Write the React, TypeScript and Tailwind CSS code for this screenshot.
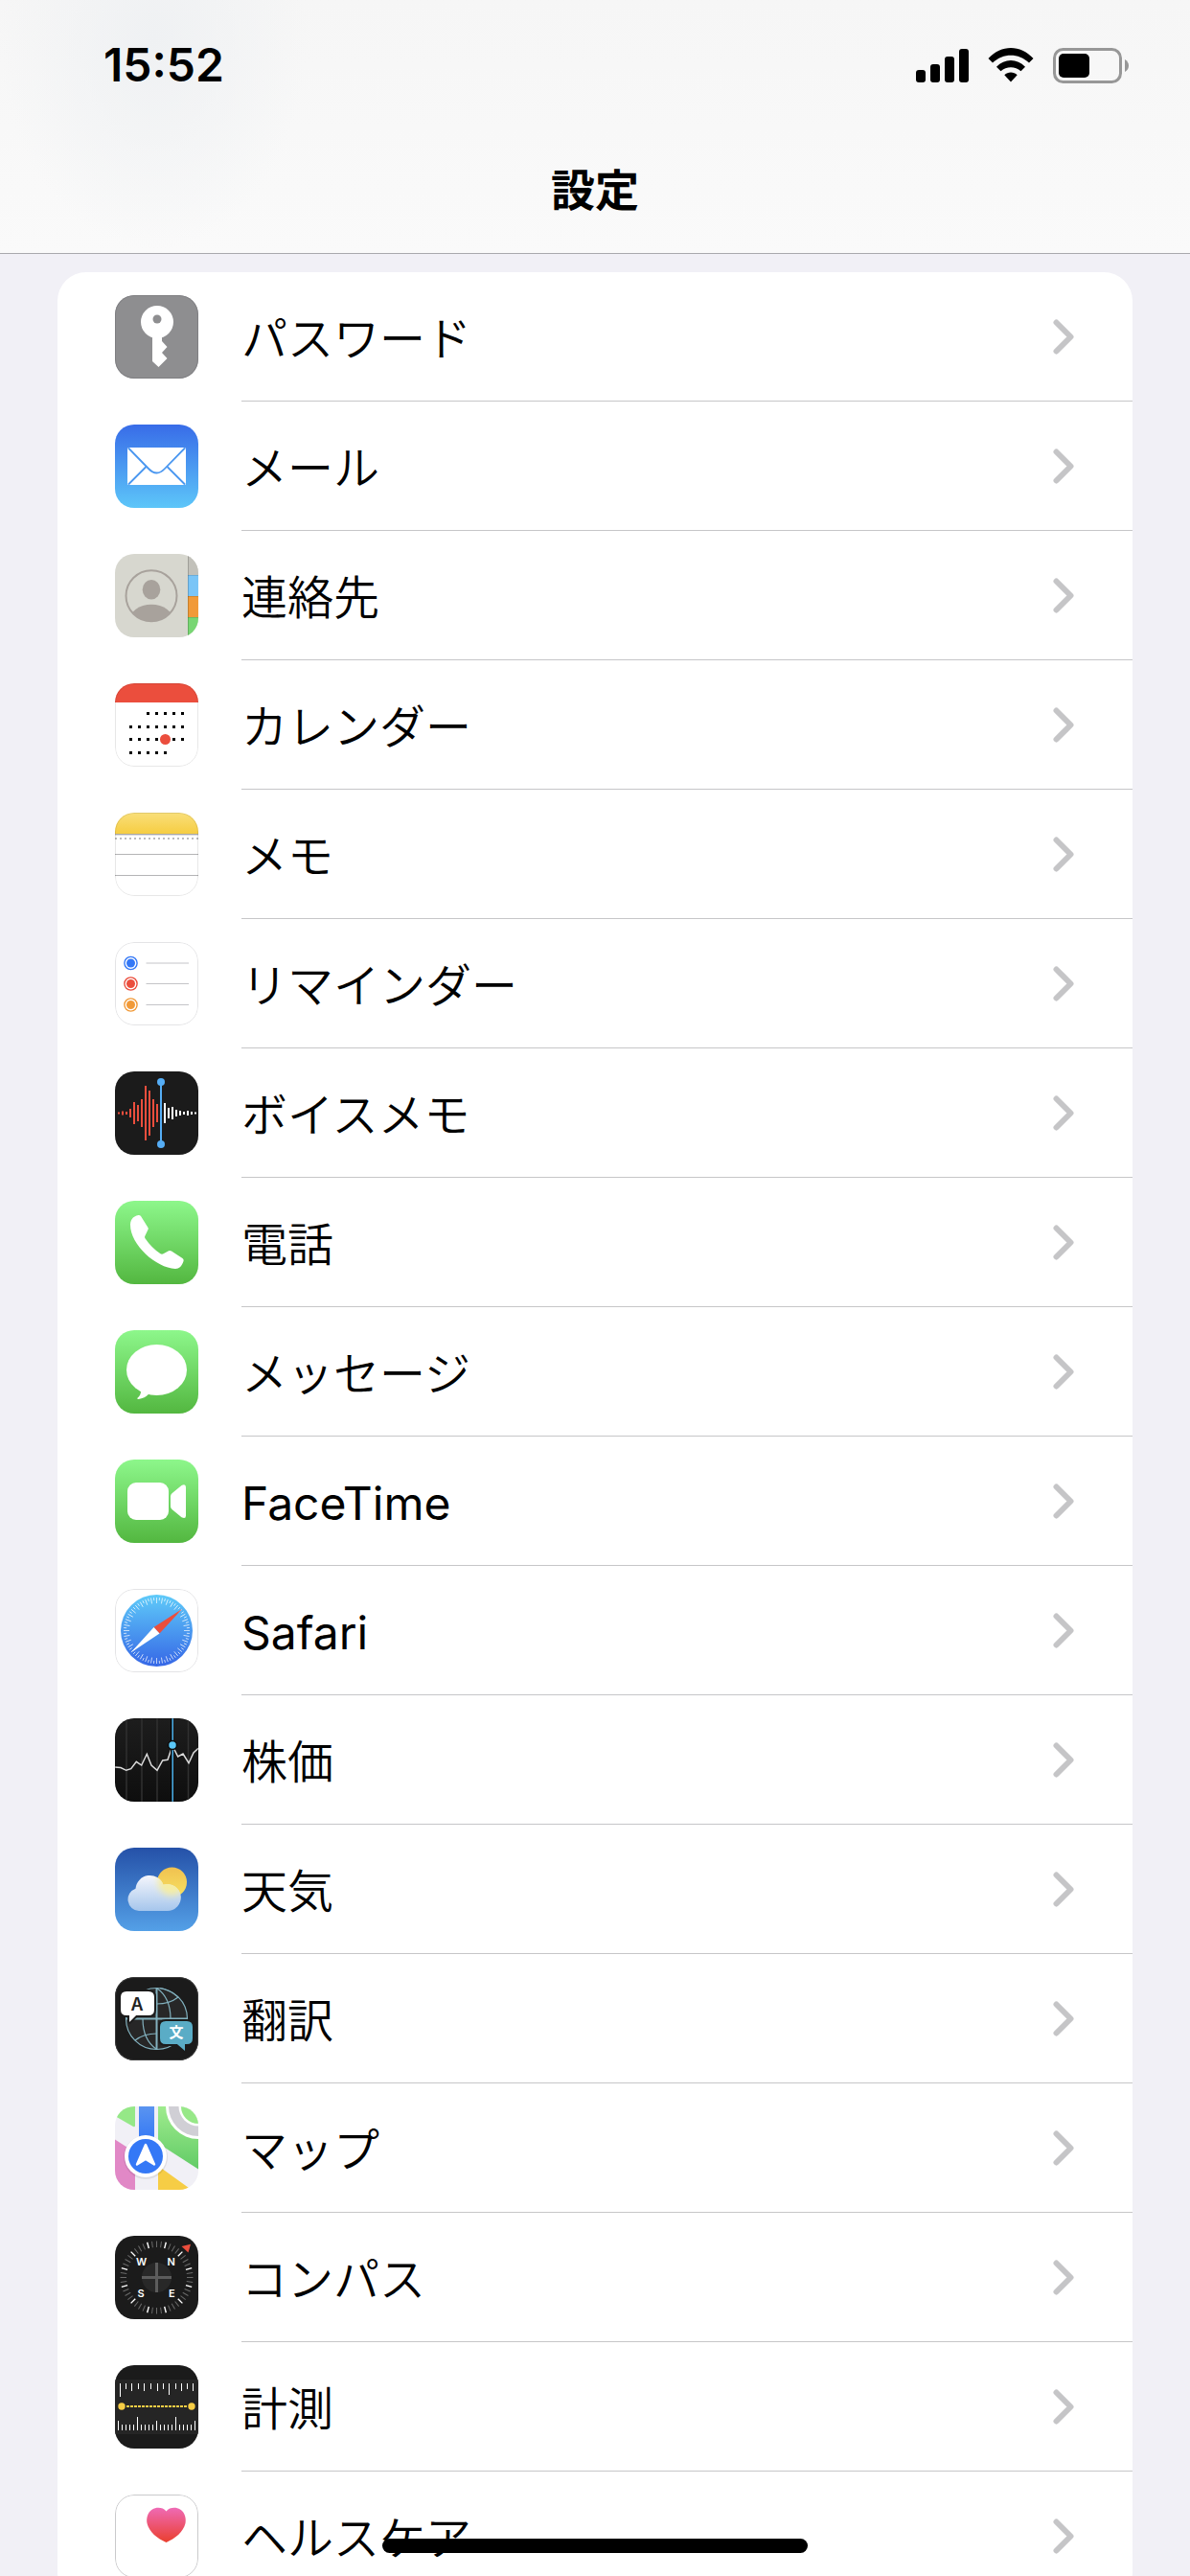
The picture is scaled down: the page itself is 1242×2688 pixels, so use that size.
import type { ReactNode } from 'react';
import clsx from 'clsx';

interface SettingsItem {
  label: string;
  href: string;
  icon: ReactNode;
  latin?: boolean;
}

const CALENDAR_COLS = [15, 24, 33, 42, 51, 60, 69];
const CALENDAR_ROWS = [
  { y: 30, from: 2, to: 6 },
  { y: 44, from: 0, to: 6 },
  { y: 57, from: 0, to: 6 },
  { y: 71, from: 0, to: 4 },
];

const WAVE_RED = [2, 4, 3, 9, 23, 17, 29, 57, 47, 29, 19];
const WAVE_WHITE = [21, 11, 13, 7, 5, 3, 5, 3, 2];

const RULER_TOP = [
  [5, 14], [11, 6], [17, 8], [24, 6], [30, 8], [37, 6], [44, 8],
  [50, 6], [56, 12], [63, 6], [69, 8], [75, 6], [81, 8],
];

function AppIcon({ children, outline }: { children: ReactNode; outline?: string }) {
  return (
    <svg viewBox="0 0 87 87" className="w-[87px] h-[87px] shrink-0 rounded-[20px]" aria-hidden="true">
      {children}
      {outline && <rect x="0.5" y="0.5" width="86" height="86" rx="19.5" fill="none" stroke={outline} />}
    </svg>
  );
}

function Gradient({ id, from, to }: { id: string; from: string; to: string }) {
  return (
    <linearGradient id={id} x1="0" y1="0" x2="0" y2="1">
      <stop offset="0" stopColor={from} />
      <stop offset="1" stopColor={to} />
    </linearGradient>
  );
}

function PasswordIcon() {
  return (
    <AppIcon outline="#7f7f82">
      <rect width="87" height="87" fill="#8e8e90" />
      <circle cx="44" cy="28" r="17" fill="#fff" />
      <path d="M39 42H49V48L54.5 54L49 60L54.5 66L45.5 75L39 69Z" fill="#fff" />
      <circle cx="44" cy="25" r="4.5" fill="#8e8e90" />
    </AppIcon>
  );
}

function MailIcon() {
  return (
    <AppIcon>
      <Gradient id="mail" from="#386ce8" to="#5dc6f9" />
      <rect width="87" height="87" fill="url(#mail)" />
      <rect x="13" y="24" width="61" height="39" rx="1.5" fill="#fff" />
      <g fill="none" stroke="#4a97f0" strokeWidth="1.8">
        <path d="M14 24.5L35 46Q43.5 55 52 46L73 24.5" />
        <path d="M14 62.5L32.5 44M73 62.5L54.5 44" />
      </g>
    </AppIcon>
  );
}

function ContactsIcon() {
  return (
    <AppIcon>
      <clipPath id="contact-clip">
        <circle cx="38" cy="43.7" r="26.5" />
      </clipPath>
      <rect width="87" height="87" fill="#d7d7cf" />
      <rect x="76" width="11" height="22" fill="#c2c1ba" />
      <rect x="76" y="22" width="11" height="22" fill="#7ac5f7" />
      <rect x="76" y="44" width="11" height="22" fill="#f19a38" />
      <rect x="76" y="66" width="11" height="21" fill="#78d673" />
      <path d="M76.5 0V87" stroke="#000" strokeOpacity="0.18" />
      <path d="M76 22.5H87M76 44.5H87M76 66.5H87" stroke="#000" strokeOpacity="0.12" />
      <circle cx="38" cy="43.7" r="26.5" fill="none" stroke="#a8a29c" strokeWidth="2" />
      <ellipse cx="38" cy="37.3" rx="9.3" ry="10.3" fill="#a8a29c" />
      <ellipse cx="38" cy="70" rx="23" ry="17.3" fill="#a8a29c" clipPath="url(#contact-clip)" />
    </AppIcon>
  );
}

function CalendarIcon() {
  return (
    <AppIcon outline="#00000018">
      <rect width="87" height="87" fill="#fff" />
      <rect width="87" height="20" fill="#eb4e3d" />
      {CALENDAR_ROWS.map((row) =>
        CALENDAR_COLS.slice(row.from, row.to + 1).map((x) => (
          <rect key={`${x}-${row.y}`} x={x} y={row.y} width="3" height="3" />
        ))
      )}
      <circle cx="52.5" cy="58.5" r="5.5" fill="#eb4e3d" />
    </AppIcon>
  );
}

function NotesIcon() {
  return (
    <AppIcon outline="#00000018">
      <Gradient id="notes" from="#f9df7a" to="#f6cd42" />
      <rect width="87" height="87" fill="#fff" />
      <rect width="87" height="22" fill="url(#notes)" />
      <rect y="22" width="87" height="1" fill="#a9a9a9" />
      <rect y="23" width="87" height="1" fill="#dcdcdc" />
      <path d="M0 27H87" stroke="#bcbcbe" strokeWidth="2" strokeDasharray="2 3" />
      <path d="M0 43.5H87M0 65.5H87" stroke="#b4b4b6" />
    </AppIcon>
  );
}

function RemindersIcon() {
  return (
    <AppIcon outline="#e4e4e6">
      <rect width="87" height="87" fill="#fff" />
      {[
        { y: 22, color: '#3478f6' },
        { y: 43.5, color: '#eb4e3d' },
        { y: 65.5, color: '#f19a38' },
      ].map(({ y, color }) => (
        <g key={color}>
          <circle cx="16.5" cy={y} r="6.6" fill="none" stroke={color} strokeWidth="1.4" />
          <circle cx="16.5" cy={y} r="4.5" fill={color} />
          <path d={`M32.5 ${y}H77`} stroke="#c4c4c8" />
        </g>
      ))}
    </AppIcon>
  );
}

function VoiceMemosIcon() {
  return (
    <AppIcon>
      <rect width="87" height="87" fill="#1b1b1b" />
      {WAVE_RED.map((h, i) => (
        <rect key={i} x={3 + i * 4} y={43.5 - h / 2} width="2" height={h} fill="#eb4e3d" />
      ))}
      {WAVE_WHITE.map((h, i) => (
        <rect key={i} x={51 + i * 4} y={43.5 - h / 2} width="2" height={h} fill="#fff" />
      ))}
      <rect x="47" y="11" width="2" height="65" fill="#55adf5" />
      <circle cx="48" cy="11" r="4" fill="#55adf5" />
      <circle cx="48" cy="76" r="4" fill="#55adf5" />
    </AppIcon>
  );
}

function PhoneIcon() {
  return (
    <AppIcon>
      <Gradient id="phone" from="#8df78b" to="#53b740" />
      <rect width="87" height="87" fill="url(#phone)" />
      <path
        d="M16 25C16 19 19.5 16 24.5 15Q26 14.8 27 16L34.5 28Q35 29 34.5 30L31.2 37Q30.8 38.2 31.5 39.3Q38 49 47.5 55.3Q49 56.2 50.5 55.3L56 52.3Q57.5 51.7 59 52.5L70.5 60Q72 61 71.5 63C70 68 67 71 63 71C43 70 16 46 16 25Z"
        fill="#fff"
      />
    </AppIcon>
  );
}

function MessagesIcon() {
  return (
    <AppIcon>
      <Gradient id="messages" from="#8df78b" to="#53b740" />
      <rect width="87" height="87" fill="url(#messages)" />
      <ellipse cx="43.5" cy="41.5" rx="31.5" ry="26.5" fill="#fff" />
      <path d="M27 62C27.5 66 26 69 23.3 71Q23 72 24.5 72Q31 71 35.5 66.5Z" fill="#fff" />
    </AppIcon>
  );
}

function FaceTimeIcon() {
  return (
    <AppIcon>
      <Gradient id="facetime" from="#8df78b" to="#53b740" />
      <rect width="87" height="87" fill="url(#facetime)" />
      <rect x="13" y="24" width="43" height="39" rx="9" fill="#fff" />
      <path
        d="M58 38.5Q58 36.5 59.5 35.3L69.5 27Q74 24.8 74 29V58.5Q74 62.5 69.5 60.3L59.5 52Q58 50.7 58 49Z"
        fill="#fff"
      />
    </AppIcon>
  );
}

function SafariIcon() {
  return (
    <AppIcon outline="#e4e4e6">
      <Gradient id="safari" from="#5fcbf9" to="#3667e6" />
      <rect width="87" height="87" fill="#fff" />
      <circle cx="43.5" cy="43.5" r="37.5" fill="url(#safari)" />
      {Array.from({ length: 72 }, (_, i) => (
        <path
          key={i}
          d={i % 2 ? 'M43.5 9V12' : 'M43.5 9V15'}
          stroke="#fff"
          strokeOpacity="0.85"
          strokeWidth="0.8"
          transform={`rotate(${i * 5} 43.5 43.5)`}
        />
      ))}
      <path d="M70 21L40.5 40L46.5 46.5Z" fill="#eb4e3d" />
      <path d="M16.5 66.5L40.5 40L46.5 46.5Z" fill="#fff" />
    </AppIcon>
  );
}

function StocksIcon() {
  return (
    <AppIcon outline="#00000030">
      <Gradient id="stocks" from="#1d1d1d" to="#0e0e0e" />
      <rect width="87" height="87" fill="url(#stocks)" />
      <path d="M12 0V87M28 0V87M44 0V87M76.5 0V87" stroke="#303030" strokeWidth="1.5" />
      <path
        d="M0 51L6 51.5L11.7 54.3L16.7 52.7L22.3 45.3L27.7 49L33.3 37.3L38 49L44 54.3L49.7 44L55 43.3L60 28.7L65.7 40L71 37L77 46.7L82 36L87 31.3"
        fill="none"
        stroke="#dcdcdc"
        strokeWidth="1.5"
      />
      <path d="M58.5 0V87" stroke="#000" />
      <path d="M60.2 0V87" stroke="#46a5dc" strokeWidth="1.6" />
      <circle cx="60" cy="28" r="4.5" fill="#5ac8f8" stroke="#0c0c0c" strokeWidth="1.5" />
    </AppIcon>
  );
}

function WeatherIcon() {
  return (
    <AppIcon>
      <Gradient id="sky" from="#2551a8" to="#54a0e7" />
      <Gradient id="sun" from="#f0c150" to="#f7e262" />
      <linearGradient id="cloud" gradientUnits="userSpaceOnUse" x1="0" y1="28" x2="0" y2="66">
        <stop offset="0" stopColor="#f7f7fc" />
        <stop offset="1" stopColor="#a6c6ec" />
      </linearGradient>
      <clipPath id="cloud-clip">
        <path d="M25 66A12 12 0 0 1 21.5 42.7A15 15 0 0 1 50.5 38.7A14 14 0 1 1 54 66Z" />
      </clipPath>
      <filter id="sun-glow" x="-50%" y="-50%" width="200%" height="200%">
        <feGaussianBlur stdDeviation="3.5" />
      </filter>
      <rect width="87" height="87" fill="url(#sky)" />
      <circle cx="59.5" cy="36" r="15.5" fill="url(#sun)" />
      <g clipPath="url(#cloud-clip)">
        <rect width="87" height="87" fill="url(#cloud)" />
        <circle cx="59" cy="36" r="14" fill="#f8ee9a" fillOpacity="0.9" filter="url(#sun-glow)" />
      </g>
    </AppIcon>
  );
}

function TranslateIcon() {
  return (
    <AppIcon outline="#3a3a3a">
      <rect width="87" height="87" fill="#1b1b1b" />
      <circle cx="43.5" cy="43.5" r="32" fill="#272727" />
      <g fill="none" stroke="#82b1be" strokeWidth="1.2">
        <circle cx="43.5" cy="43.5" r="32" />
        <path d="M43.5 11.5C53 18 58 30 58 43.5M43.5 75.5C34 69 29 57 29 43.5" />
        <path d="M43.5 28Q57 28 66 21M43.5 59Q30 59 21 66" />
        <path d="M47 11.5Q58 14 66 21" />
        <path d="M43.5 11.5V75.5M11.5 43.5H75.5" strokeWidth="2" />
      </g>
      <path
        d="M12 14H35Q42 14 42 21V34Q42 41 35 41H22.5L16 47.5Q14 48.5 14 46V41H12Q5 41 5 34V21Q5 14 12 14Z"
        fill="#fff"
        stroke="#1b1b1b"
        strokeWidth="2"
      />
      <text x="23" y="34.5" textAnchor="middle" fontSize="18" fontWeight="600" fill="#222" className="font-['Inter',sans-serif]">
        A
      </text>
      <path
        d="M53 45H75Q82 45 82 52V64Q82 71 75 71H74V76Q74 79 71.5 77L64.5 71H53Q46 71 46 64V52Q46 45 53 45Z"
        fill="#5aacc6"
        stroke="#1b1b1b"
        strokeWidth="2"
      />
      <text x="64" y="63" textAnchor="middle" fontSize="15" fontWeight="700" fill="#fff" className="font-['Noto_Sans_CJK_JP',sans-serif]">
        文
      </text>
    </AppIcon>
  );
}

function MapsIcon() {
  return (
    <AppIcon>
      <Gradient id="park" from="#9fec8e" to="#62cb66" />
      <Gradient id="road" from="#5a94f0" to="#3075f6" />
      <rect width="87" height="87" fill="#f1f0f6" />
      <path d="M0 0H21V20Q21 22 19 21L0 10Z" fill="#95e887" />
      <path d="M45 0H87V65.5L52 43L45 38Z" fill="url(#park)" />
      <circle cx="87" cy="0" r="34" fill="#fff" />
      <circle cx="87" cy="0" r="31" fill="#d0cfd5" />
      <circle cx="87" cy="0" r="20.5" fill="#fff" />
      <circle cx="87" cy="0" r="18" fill="#97e888" />
      <path d="M0 34.5L21 48V87H0Z" fill="#e188c6" />
      <path d="M45 62L77 85L80 87H45Z" fill="#f6cd45" />
      <rect x="25" width="16" height="40" fill="url(#road)" />
      <circle cx="32" cy="53" r="23" fill="#000" fillOpacity="0.08" />
      <circle cx="32" cy="52" r="22" fill="#fff" />
      <circle cx="32" cy="52" r="18" fill="#3478f6" />
      <path
        d="M32 40L41 60.5L32 55L23 60.5Z"
        fill="#fff"
        stroke="#fff"
        strokeWidth="2.4"
        strokeLinejoin="round"
      />
    </AppIcon>
  );
}

function CompassIcon() {
  return (
    <AppIcon>
      <rect width="87" height="87" fill="#1b1b1b" />
      {Array.from({ length: 48 }, (_, i) => (
        <path
          key={i}
          d="M43.5 5.5V12"
          stroke={i % 4 === 2 ? '#fff' : '#6a6a6a'}
          strokeWidth={i % 4 === 2 ? 1.4 : 1}
          transform={`rotate(${i * 7.5} 43.5 43.5)`}
        />
      ))}
      <circle cx="43.5" cy="43.5" r="15.5" fill="#282828" />
      <path d="M43.5 28V59M28 43.5H59" stroke="#5c5c5c" strokeWidth="3" />
      <path d="M69.5 11L79 8.7L76.5 17.5Z" fill="#eb4e3d" />
      <g textAnchor="middle" fontSize="11" fontWeight="600" fill="#fff" className="font-['Inter',sans-serif]">
        <text x="27.5" y="31.3">W</text>
        <text x="58.7" y="31.3">N</text>
        <text x="27" y="64.3">S</text>
        <text x="59.3" y="64.3">E</text>
      </g>
    </AppIcon>
  );
}

function MeasureIcon() {
  return (
    <AppIcon>
      <rect width="87" height="87" fill="#1b1b1b" />
      <rect y="15" width="87" height="57" fill="#252525" />
      {RULER_TOP.map(([x, h]) => (
        <rect key={x} x={x} y="19" width="1" height={h} fill="#fff" />
      ))}
      {Array.from({ length: 21 }, (_, i) => {
        const h = i % 10 === 5 ? 14 : i % 10 === 0 ? 10 : 6;
        return <rect key={i} x={3 + i * 4} y={68 - h} width="1" height={h} fill="#fff" />;
      })}
      <path d="M12 43H76" stroke="#f6cd45" strokeWidth="2" strokeDasharray="3 1" />
      <circle cx="7" cy="43" r="3.7" fill="#f6cd45" />
      <circle cx="80" cy="43" r="3.7" fill="#f6cd45" />
    </AppIcon>
  );
}

function HealthIcon() {
  return (
    <AppIcon outline="#cacacc">
      <Gradient id="heart" from="#ef6ab5" to="#ea3f2e" />
      <rect width="87" height="87" fill="#fff" />
      <path
        d="M53.5 17.5C57 13 64 13 68 15.5C73 18.5 74.5 25 73.5 30C71.5 39 62.5 46 53.5 50C44.5 46 35.5 39 33.5 30C32.5 25 34 18.5 39 15.5C43 13 50 13 53.5 17.5Z"
        fill="url(#heart)"
      />
    </AppIcon>
  );
}

const items: SettingsItem[] = [
  { label: 'パスワード', href: '#passwords', icon: <PasswordIcon /> },
  { label: 'メール', href: '#mail', icon: <MailIcon /> },
  { label: '連絡先', href: '#contacts', icon: <ContactsIcon /> },
  { label: 'カレンダー', href: '#calendar', icon: <CalendarIcon /> },
  { label: 'メモ', href: '#notes', icon: <NotesIcon /> },
  { label: 'リマインダー', href: '#reminders', icon: <RemindersIcon /> },
  { label: 'ボイスメモ', href: '#voice-memos', icon: <VoiceMemosIcon /> },
  { label: '電話', href: '#phone', icon: <PhoneIcon /> },
  { label: 'メッセージ', href: '#messages', icon: <MessagesIcon /> },
  { label: 'FaceTime', href: '#facetime', icon: <FaceTimeIcon />, latin: true },
  { label: 'Safari', href: '#safari', icon: <SafariIcon />, latin: true },
  { label: '株価', href: '#stocks', icon: <StocksIcon /> },
  { label: '天気', href: '#weather', icon: <WeatherIcon /> },
  { label: '翻訳', href: '#translate', icon: <TranslateIcon /> },
  { label: 'マップ', href: '#maps', icon: <MapsIcon /> },
  { label: 'コンパス', href: '#compass', icon: <CompassIcon /> },
  { label: '計測', href: '#measure', icon: <MeasureIcon /> },
  { label: 'ヘルスケア', href: '#health', icon: <HealthIcon /> },
];

function StatusBar() {
  return (
    <div className="flex items-center justify-between h-[136px] pl-[108px] pr-[63px]">
      <span className="text-5xl leading-none font-semibold">15:52</span>
      <div className="flex items-center gap-5">
        <svg viewBox="0 0 55 35" className="w-[55px] h-[35px]" aria-hidden="true">
          <rect y="22" width="10" height="13" rx="3" />
          <rect x="15" y="16" width="10" height="19" rx="3" />
          <rect x="30" y="8" width="10" height="27" rx="3" />
          <rect x="45" width="10" height="35" rx="3" />
        </svg>
        <svg viewBox="0 0 48 36" className="w-12 h-9" aria-hidden="true">
          <path d="M0.5 11C14 -3.6 34 -3.6 47.5 11L43 15.5C32 5 16 5 5 15.5Z" />
          <path d="M9 19.7C17.5 10.7 30.5 10.7 39 19.7L34.5 24.3C28.5 18.8 19.5 18.8 13.5 24.3Z" />
          <path d="M17.3 28.3C21 24.5 27 24.5 30.7 28.3L24 35.5Z" />
        </svg>
        <svg viewBox="0 0 80 37" className="w-20 h-[37px]" aria-hidden="true">
          <rect x="1.5" y="1.5" width="69" height="34" rx="9" fill="none" stroke="#979797" strokeWidth="3" />
          <rect x="6" y="6" width="32" height="25" rx="5" />
          <path d="M75 12V25Q79 22.5 79 18.5Q79 14.5 75 12Z" fill="#979797" />
        </svg>
      </div>
    </div>
  );
}

function SettingsRow({ item }: { item: SettingsItem }) {
  return (
    <li>
      <a href={item.href} className="flex items-center gap-[45px] h-[135px] pl-15 text-black">
        {item.icon}
        <span className="flex flex-1 items-center justify-between h-full pr-[61px] border-b border-[#c6c6c8]">
          <span className={clsx('pt-1.5 text-5xl leading-none', item.latin ? 'font-normal' : 'font-[350]')}>
            {item.label}
          </span>
          <svg viewBox="0 0 22 37" className="w-[22px] h-[37px]" aria-hidden="true">
            <path
              d="M3.5 3.5L18.5 18.5L3.5 33.5"
              fill="none"
              stroke="#c5c5c7"
              strokeWidth="6"
              strokeLinecap="round"
              strokeLinejoin="round"
            />
          </svg>
        </span>
      </a>
    </li>
  );
}

export default function App() {
  return (
    <div className="relative flex flex-col h-screen overflow-hidden bg-[#f1f0f6] text-black font-['Inter','Noto_Sans_CJK_JP',sans-serif]">
      <header className="shrink-0 border-b border-[#a9a9ad] bg-linear-to-b from-[#f6f6f6] to-[#fafafa]">
        <div className="bg-[radial-gradient(ellipse_160px_220px_at_160px_40px,#eff1f3,transparent)]">
          <StatusBar />
          <div className="flex items-center justify-center h-32 pb-1">
            <h1 className="text-[46px] leading-none font-bold">設定</h1>
          </div>
        </div>
      </header>

      <main className="flex-1 overflow-y-auto px-15 pt-[19px] [scrollbar-width:none]">
        <ul className="bg-white rounded-[30px] overflow-hidden">
          {items.map((item) => (
            <SettingsRow key={item.href} item={item} />
          ))}
        </ul>
      </main>

      {/* Home indicator floats over the list */}
      <div className="absolute bottom-6 left-1/2 -translate-x-1/2 w-[444px] h-[15px] rounded-full bg-black" />
    </div>
  );
}
